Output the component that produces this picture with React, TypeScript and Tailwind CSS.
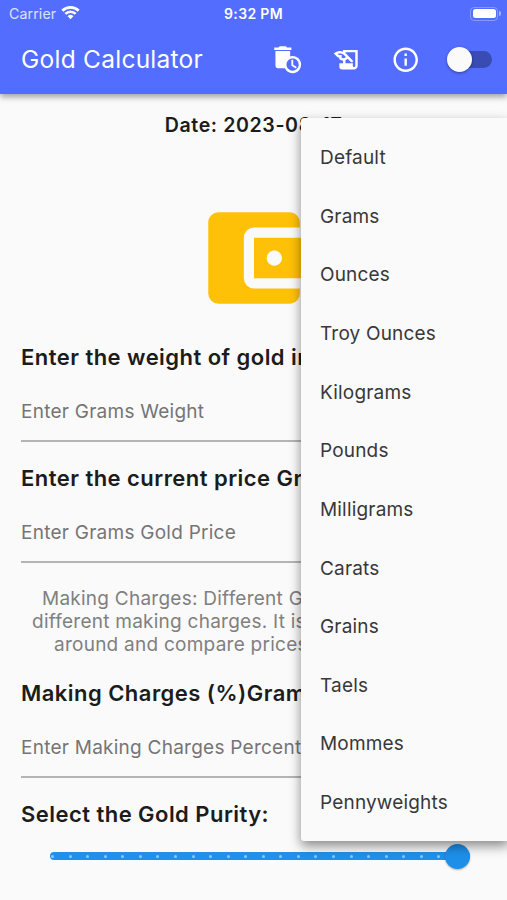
import { MdAccountBalanceWallet, MdAutoDelete, MdHistoryEdu, MdInfoOutline } from 'react-icons/md';

const units = [
  'Default',
  'Grams',
  'Ounces',
  'Troy Ounces',
  'Kilograms',
  'Pounds',
  'Milligrams',
  'Carats',
  'Grains',
  'Taels',
  'Mommes',
  'Pennyweights',
];

const ticks = Array.from({ length: 24 }, (_, i) => i);

function StatusBar() {
  return (
    <div className="relative flex h-[27px] items-center justify-between pl-[9px] pr-[6px]">
      <div className="flex items-center gap-[5px]">
        <span className="text-[14.2px] tracking-[0.1px] text-white/80">Carrier</span>
        <svg className="-mt-px" width="19" height="15" viewBox="0 0 20 15" fill="none" stroke="white" strokeWidth="2.8">
          <path d="M1.4 5.6a12.2 12.2 0 0 1 17.2 0" />
          <path d="M4.6 9a7.6 7.6 0 0 1 10.8 0" />
          <path d="M10 14.5 6.9 11.4a4.4 4.4 0 0 1 6.2 0Z" fill="white" stroke="none" />
        </svg>
      </div>
      <span className="absolute left-1/2 -translate-x-1/2 whitespace-nowrap text-[14px] font-semibold tracking-[0.35px] text-white">
        9:32 PM
      </span>
      <div className="flex items-center gap-px">
        <div className="h-[14px] w-[28px] rounded-[4px] border border-white/30 p-[1.5px]">
          <div className="h-full rounded-[2.5px] bg-white" />
        </div>
        <div className="h-[5px] w-[2px] rounded-r-full bg-white/50" />
      </div>
    </div>
  );
}

function AppBar() {
  return (
    <header className="relative h-[94px] bg-[#526dff] shadow-[0_3px_6px_rgba(0,0,0,0.36)]">
      <StatusBar />
      <div className="flex h-[65px] items-center pl-[21px] pr-[15.5px] text-white">
        <h1 className="flex-1 whitespace-nowrap text-[24.5px] font-normal tracking-[0.25px]">Gold Calculator</h1>
        <MdAutoDelete className="mr-[30px] size-[29.4px]" />
        <MdHistoryEdu className="mr-[29px] size-[29.4px]" />
        <MdInfoOutline className="mr-[26.5px] size-[29.4px]" />
        <div className="relative flex h-[25px] w-[45px] items-center">
          <div className="ml-[4px] h-[17px] w-[41px] rounded-full bg-[#394cb2]" />
          <div className="absolute left-0 size-[25px] rounded-full bg-[#fafafa] shadow-[0_1px_3px_rgba(0,0,0,0.4)]" />
        </div>
      </div>
    </header>
  );
}

function Field({ label, hint }: { label: string; hint: string }) {
  return (
    <div className="h-[121px] overflow-hidden whitespace-nowrap">
      <h2 className="h-[30px] text-[22px] font-semibold leading-[30px] tracking-[0.46px] text-[#1c1c1c]">{label}</h2>
      <div className="h-[70px] border-b-2 border-[#b4b4b4] pt-[25px] text-[19px] leading-[30px] tracking-[0.25px] text-[#757575]">
        {hint}
      </div>
    </div>
  );
}

function PuritySlider() {
  return (
    <div className="relative ml-[29px] mr-[16px] mt-[14px] flex h-[26px] items-center">
      <div className="flex h-[8px] w-full items-center justify-between rounded-full bg-[#2090ea] pl-[1px] pr-[12px]">
        {ticks.map((i) => (
          <span key={i} className="size-[3px] rounded-full bg-[#8fc8f7]" />
        ))}
      </div>
      <div className="absolute right-0 size-[25px] rounded-full bg-[#1e8fe9] shadow-[0_1px_2px_rgba(0,0,0,0.3)]" />
    </div>
  );
}

function UnitMenu() {
  return (
    <ul className="absolute left-[301px] top-[118px] h-[723px] w-[208px] rounded-[3px] bg-[#fafafa] py-[11px] shadow-[0_5px_12px_rgba(0,0,0,0.45)]">
      {units.map((unit) => (
        <li key={unit} className="flex h-[58.65px] items-center pl-[19px] text-[19px] tracking-[0.18px] text-[#383838]">
          {unit}
        </li>
      ))}
    </ul>
  );
}

export default function App() {
  return (
    <div className="relative h-[900px] w-[507px] overflow-hidden bg-[#fafafa] font-['Inter',sans-serif]">
      <AppBar />
      <main className="px-[21px]">
        <p className="mt-[16px] h-[30px] text-center text-[19.6px] font-semibold leading-[30px] tracking-[0.6px] text-[#1c1c1c]">
          Date: 2023-08-17
        </p>
        <MdAccountBalanceWallet className="mx-auto mt-[57px] size-[122px] text-[#ffc107]" />
        <div className="mt-[23px]">
          <Field label="Enter the weight of gold in Grams:" hint="Enter Grams Weight" />
          <Field label="Enter the current price Grams:" hint="Enter Grams Gold Price" />
        </div>
        <div className="mt-[2.5px] h-[91.5px] whitespace-nowrap text-[19px] leading-[23.3px] tracking-[0.25px] text-[#808080]">
          <p className="pl-[21px]">Making Charges: Different Goldsmiths have</p>
          <p className="pl-[11px]">different making charges. It is advised to shop</p>
          <p className="pl-[33px]">around and compare prices before buying.</p>
        </div>
        <Field label="Making Charges (%)Grams:" hint="Enter Making Charges Percentage" />
        <h2 className="text-[22px] font-semibold leading-[30px] tracking-[0.46px] text-[#1c1c1c]">
          Select the Gold Purity:
        </h2>
        <PuritySlider />
      </main>
      <UnitMenu />
    </div>
  );
}
